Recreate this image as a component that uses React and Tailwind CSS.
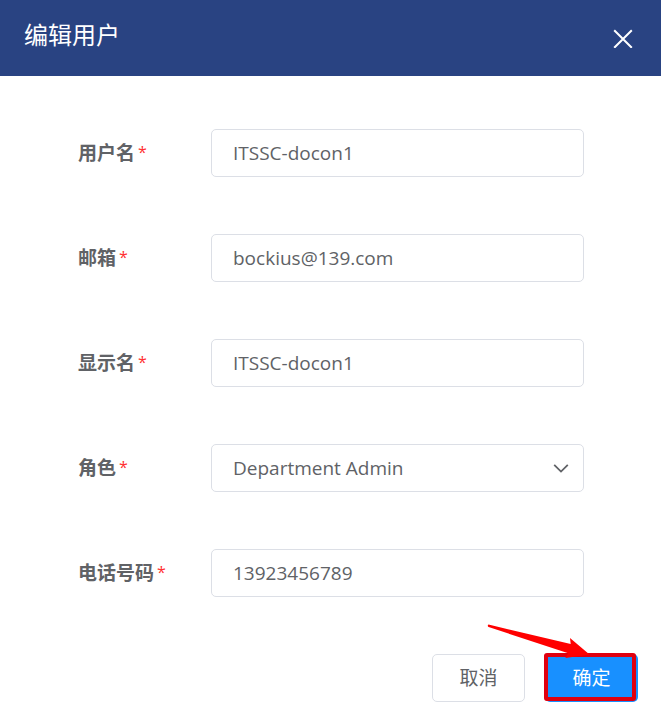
import React from "react";

const fields = [
  { id: "username", label: "用户名", value: "ITSSC-docon1", type: "text" },
  { id: "email", label: "邮箱", value: "bockius@139.com", type: "email" },
  { id: "display", label: "显示名", value: "ITSSC-docon1", type: "text" },
  { id: "role", label: "角色", value: "Department Admin", type: "select" },
  { id: "phone", label: "电话号码", value: "13923456789", type: "tel" },
];

const control =
  "h-12 w-full rounded-[5px] border border-[#dcdfe6] bg-white px-[21px] text-[19px] text-[#606266] outline-none";

function Field({ id, label, value, type }) {
  return (
    <div className="flex items-center">
      <label htmlFor={id} className="w-[133px] shrink-0 text-[19px] leading-6 font-bold text-[#606266]">
        {label}
        <span className="ml-[3px] align-[2px] text-base leading-4 font-normal text-[#ff3030]">*</span>
      </label>
      <div className="relative min-w-0 flex-1">
        {type === "select" ? (
          <>
            <select id={id} defaultValue={value} className={control + " block appearance-none"}>
              <option>{value}</option>
            </select>
            <svg
              className="pointer-events-none absolute top-4 right-[15px] h-4 w-4"
              viewBox="0 0 16 16"
              fill="none"
              stroke="#606266"
              strokeWidth="1.8"
              aria-hidden="true"
            >
              <path d="M1.2 4.8L8 11.6l6.8-6.8" />
            </svg>
          </>
        ) : (
          <input id={id} type={type} defaultValue={value} className={control + " block"} />
        )}
      </div>
    </div>
  );
}

export default function App() {
  return (
    <div className="bg-white font-['Open_Sans','Noto_Sans_CJK_SC',sans-serif]">
      <header className="flex h-[76px] items-center justify-between bg-[#294382] pr-7 pl-6 text-white">
        <h1 className="pb-1.5 text-2xl leading-8 font-normal">编辑用户</h1>
        <button type="button" aria-label="关闭">
          <svg className="block h-5 w-5" viewBox="0 0 20 20" fill="none" stroke="currentColor" strokeWidth="2" aria-hidden="true">
            <path d="M1.2 2.2l17.6 17.6M18.8 2.2L1.2 19.8" />
          </svg>
        </button>
      </header>
      <form onSubmit={(e) => e.preventDefault()}>
        <div className="flex flex-col gap-[57px] pt-[53px] pr-[77px] pl-[78px]">
          {fields.map((f) => (
            <Field key={f.id} {...f} />
          ))}
        </div>
        <div className="flex justify-end gap-5 pt-[57px] pr-[23px] pb-4">
          <button type="button" className="h-12 w-[93px] rounded-[5px] border border-[#dcdfe6] bg-white text-[19px] text-[#606266]">
            取消
          </button>
          <div className="relative">
            <button type="submit" className="block h-12 w-[93px] rounded-[5px] bg-[#1890ff] text-[19px] text-white">
              确定
            </button>
            <svg
              className="pointer-events-none absolute -top-[30px] -left-[58px] h-[80px] w-[152px]"
              viewBox="0 0 152 80"
              aria-hidden="true"
            >
              <rect x="59" y="31" width="88" height="44" rx="1" fill="none" stroke="#e0000f" strokeWidth="4" />
              <path d="M1.5 0.6L83.7 20 83 14l19.5 16.5-24.2 3.5 3-4.8L1.6 3Q0 1.6 1.5 0.6z" fill="#ff0000" />
            </svg>
          </div>
        </div>
      </form>
    </div>
  );
}
